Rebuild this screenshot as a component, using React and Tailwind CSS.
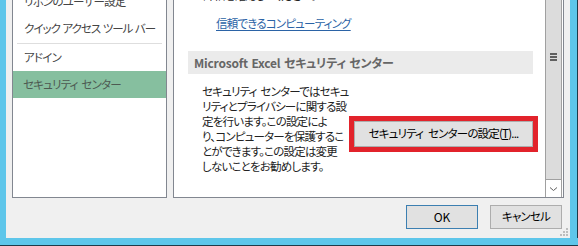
import React from "react";

const jp = "font-['Meiryo_UI','Noto_Sans_CJK_JP',sans-serif] [font-feature-settings:'palt']";

export default function App() {
  return (
    <div className={`w-[578px] h-[246px] flex flex-col overflow-hidden bg-[#f0f0f0] text-[11.5px] tracking-[-0.8px] [word-spacing:2px] ${jp}`}>
      <div className="flex h-[238px]">
        <div className="w-[6px] bg-[#5ec6ea]" />
        <div className="relative flex-1 flex flex-col">
          {/* panels */}
          <div className="flex h-[198px] pl-[6px] gap-[6px]">
            {/* left list */}
            <div className="w-[155px] h-full bg-white border border-t-0 border-[#828790] overflow-hidden flex flex-col text-[#444]">
              <div className="-mt-[12px] h-[28px] flex items-center pl-[11px] whitespace-nowrap">リボンのユーザー設定</div>
              <div className="h-[26px] flex items-center pl-[11px] whitespace-nowrap tracking-[-1px] [word-spacing:1px]">クイック アクセス ツール バー</div>
              <div className="mt-[1px] mx-[4px] h-[1px] bg-[#dedede]" />
              <div className="h-[27px] flex items-center pl-[11px] whitespace-nowrap">アドイン</div>
              <div className="h-[27px] flex items-center pl-[10px] bg-[#86bf9f] text-[#4d5a52] whitespace-nowrap">セキュリティ センター</div>
            </div>
            {/* right content */}
            <div className="w-[391px] h-full bg-white border border-t-0 border-[#828790] flex overflow-hidden">
              <div className="flex-1 flex flex-col">
                <div className="-mt-[12px] h-[15px] leading-[15px] pl-[29px] text-[#222] whitespace-nowrap">詳細を確認してください。</div>
                <div className="mt-[13px] h-[15px] leading-[15px] pl-[42px] whitespace-nowrap">
                  <span className="text-[#2b63a6] underline underline-offset-2">信頼できるコンピューティング</span>
                </div>
                <div className="mt-[20px] ml-[14px] w-[345px] h-[23px] bg-[#ebebeb] flex items-center pl-[6px] text-[12px] tracking-[-0.2px] [word-spacing:1px] font-bold text-[#666] whitespace-nowrap">
                  Microsoft Excel セキュリティ センター
                </div>
                <div className="mt-[10px] flex pl-[28px]">
                  <div className="w-[143px] leading-[15px] text-[#222] whitespace-nowrap">
                    セキュリティ センターではセキュ<br />
                    リティとプライバシーに関する設<br />
                    定を行います。この設定によ<br />
                    り、コンピューターを保護するこ<br />
                    とができます。この設定は変更<br />
                    しないことをお勧めします。
                  </div>
                  <div className="ml-[4px] mt-[32px] w-[189px] h-[36px] border-[5px] border-[#e2232b] flex">
                    <button className="flex-1 bg-[#e1e1e1] border border-[#adadad] text-black flex items-center justify-center whitespace-nowrap [word-spacing:3px]">
                      セキュリティ センターの設定(<span className="underline">T</span>)...
                    </button>
                  </div>
                </div>
              </div>
              {/* scrollbar */}
              <div className="w-[17px] border-x border-[#a0a0a0] flex flex-col">
                <div className="h-[180px] bg-[#dcdcdc] border-b border-[#a0a0a0] flex flex-col items-center pt-[53px] gap-[1px]">
                  <div className="w-[7px] h-[2px] bg-[#606060]" />
                  <div className="w-[7px] h-[2px] bg-[#606060]" />
                  <div className="w-[7px] h-[2px] bg-[#606060]" />
                </div>
                <div className="flex-1 bg-white flex items-center justify-center">
                  <svg width="9" height="6" viewBox="0 0 9 6">
                    <path d="M1 1.5 L4.5 4.5 L8 1.5" fill="none" stroke="#606060" strokeWidth="1" />
                  </svg>
                </div>
              </div>
              <div className="w-[1px] bg-white" />
            </div>
          </div>
          {/* buttons */}
          <div className="mt-[7px] flex justify-end gap-[12px] pr-[8px]">
            <button className="w-[72px] h-[24px] bg-[#e1e1e1] border border-[#3c7fb1] text-black text-[12px] tracking-normal flex items-center justify-center">OK</button>
            <button className="w-[72px] h-[24px] bg-[#e1e1e1] border border-[#adadad] text-black flex items-center justify-center">キャンセル</button>
          </div>
          <svg className="absolute right-[2px] bottom-[2px]" width="8" height="8" viewBox="0 0 8 8">
            <rect x="6" y="0" width="2" height="2" fill="#bdbdbd" />
            <rect x="3" y="3" width="2" height="2" fill="#bdbdbd" />
            <rect x="6" y="3" width="2" height="2" fill="#bdbdbd" />
            <rect x="0" y="6" width="2" height="2" fill="#bdbdbd" />
            <rect x="3" y="6" width="2" height="2" fill="#bdbdbd" />
            <rect x="6" y="6" width="2" height="2" fill="#bdbdbd" />
          </svg>
        </div>
        <div className="w-[7px] bg-[#5ec6ea]" />
        <div className="w-[1px] bg-[#1e3a48]" />
      </div>
      <div className="h-[7px] bg-[#5ec6ea]" />
      <div className="h-[1px] bg-[#1e3a48]" />
    </div>
  );
}
